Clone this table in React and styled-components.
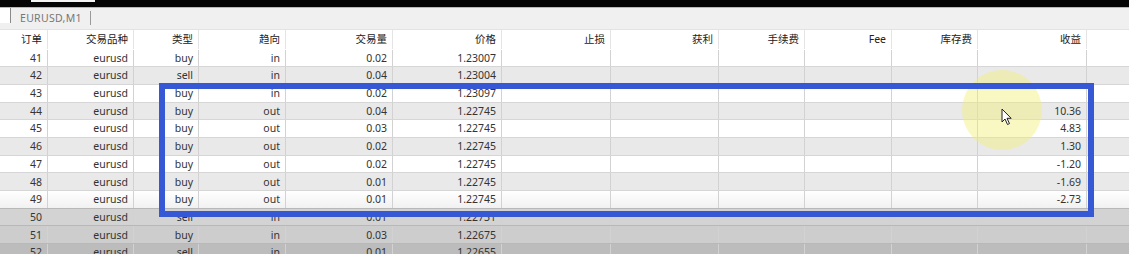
import React from 'react'
import styled, { createGlobalStyle } from 'styled-components'

const GlobalStyle = createGlobalStyle`
  html, body {
    margin: 0;
    padding: 0;
    background: #fff;
    overflow: hidden;
  }
  body {
    font-family: 'Noto Sans', 'Noto Sans CJK SC', sans-serif;
  }
`

const COLS = '48px 86px 65px 87px 107px 109px 109px 108px 86px 87px 86px 109px 1fr'
const ROW_H = '17.7px'

const Screen = styled.div`
  position: relative;
  width: 1129px;
  height: 254px;
  overflow: hidden;
  background: #fff;
`

const TopBar = styled.div`
  height: 7px;
  background: #050505;
`

const TopTab = styled.div`
  margin-left: 31px;
  width: 64px;
  height: 2px;
  background: #f4f4f4;
`

const TabStrip = styled.div`
  display: flex;
  align-items: stretch;
  height: 23px;
  background: #f0f0f0;
  border-top: 1px solid #b9b9b9;
  border-bottom: 1px solid #e2e2e2;
  box-sizing: border-box;
`

const Corner = styled.div`
  width: 10px;
  background: #fff;
  margin-bottom: 6px;
  border-right: 1px solid #8a8a8a;
`

const Tab = styled.div`
  display: flex;
  align-items: center;
  height: 14px;
  margin: 3px 0 5px;
  padding: 0 8px 0 9px;
  font-size: 10.5px;
  color: #777;
  letter-spacing: 0.3px;
  border-right: 1px solid #9a9a9a;
`

const Grid = styled.div`
  display: grid;
  grid-template-columns: ${COLS};
  height: ${(p) => p.$h || ROW_H};
  background: ${(p) => p.$bg || '#fff'};
  box-sizing: border-box;
  border-bottom: 1px solid ${(p) => p.$line || '#d6d6d6'};
`

const Cell = styled.div`
  display: flex;
  align-items: center;
  justify-content: flex-end;
  padding-right: 5px;
  font-size: 10.5px;
  color: ${(p) => (p.$head ? '#222' : '#333')};
  border-right: 1px solid ${(p) => (p.$head ? '#e4e4e4' : '#d2d2d2')};
  white-space: nowrap;
  overflow: hidden;
  line-height: 1;
  &:last-child {
    border-right: none;
  }
`

const Highlight = styled.div`
  position: absolute;
  left: 159px;
  top: 83px;
  width: 935px;
  height: 134px;
  border: 6px solid #3758d4;
  box-sizing: border-box;
  pointer-events: none;
`

const Spot = styled.div`
  position: absolute;
  left: 962px;
  top: 70px;
  width: 80px;
  height: 80px;
  border-radius: 50%;
  background: rgba(245, 240, 120, 0.45);
  pointer-events: none;
`

const Cursor = styled.svg`
  position: absolute;
  left: 1001px;
  top: 108px;
  pointer-events: none;
`

const headers = ['订单', '交易品种', '类型', '趋向', '交易量', '价格', '止损', '获利', '手续费', 'Fee', '库存费', '收益', '']

const rows = [
  ['41', 'eurusd', 'buy', 'in', '0.02', '1.23007', ''],
  ['42', 'eurusd', 'sell', 'in', '0.04', '1.23004', ''],
  ['43', 'eurusd', 'buy', 'in', '0.02', '1.23097', ''],
  ['44', 'eurusd', 'buy', 'out', '0.04', '1.22745', '10.36'],
  ['45', 'eurusd', 'buy', 'out', '0.03', '1.22745', '4.83'],
  ['46', 'eurusd', 'buy', 'out', '0.02', '1.22745', '1.30'],
  ['47', 'eurusd', 'buy', 'out', '0.02', '1.22745', '-1.20'],
  ['48', 'eurusd', 'buy', 'out', '0.01', '1.22745', '-1.69'],
  ['49', 'eurusd', 'buy', 'out', '0.01', '1.22745', '-2.73'],
  ['50', 'eurusd', 'sell', 'in', '0.01', '1.22731', ''],
  ['51', 'eurusd', 'buy', 'in', '0.03', '1.22675', ''],
  ['52', 'eurusd', 'sell', 'in', '0.01', '1.22655', ''],
]

const rowBg = (i) => {
  if (i === 8) return 'linear-gradient(#ffffff, #f1f1f1)'
  if (i === 9) return '#d3d3d3'
  if (i === 10) return '#cdcdcd'
  if (i === 11) return '#bcbcbc'
  return i % 2 ? '#e9e9e9' : '#fff'
}

const App = () => (
  <Screen>
    <GlobalStyle />
    <TopBar>
      <TopTab />
    </TopBar>
    <TabStrip>
      <Corner />
      <Tab>EURUSD,M1</Tab>
    </TabStrip>
    <Grid $h="19.6px" $line="#fff">
      {headers.map((h, i) => (
        <Cell key={i} $head>{h}</Cell>
      ))}
    </Grid>
    {rows.map((r, i) => {
      const [id, sym, type, dir, vol, price, profit] = r
      const cells = [id, sym, type, dir, vol, price, '', '', '', '', '', profit, '']
      return (
        <Grid key={id} $bg={rowBg(i)} $line={i >= 8 ? '#b8b8b8' : '#d6d6d6'}>
          {cells.map((c, j) => (
            <Cell key={j}>{c}</Cell>
          ))}
        </Grid>
      )
    })}
    <Spot />
    <Highlight />
    <Cursor width="12" height="18" viewBox="0 0 12 18">
      <path d="M1 1 L1 14 L4 11 L6.5 16.5 L8.5 15.6 L6 10.3 L10.2 10.3 Z" fill="#fff" stroke="#222" strokeWidth="1" strokeLinejoin="round" />
    </Cursor>
  </Screen>
)

export default App
